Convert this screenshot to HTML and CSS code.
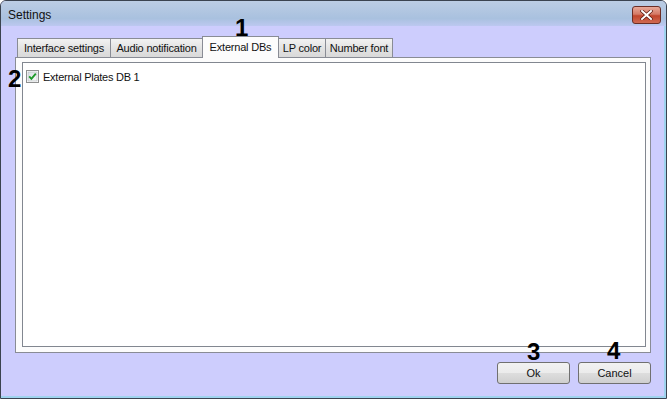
FILE: index.html
```html
<!DOCTYPE html>
<html lang="en">
<head>
  <meta charset="UTF-8">
  <title>Settings</title>
  <link rel="stylesheet" href="styles.css">
</head>
<body>
  <div class="window">
    <div class="titlebar">
      <span class="title">Settings</span>
      <div class="close">
        <svg width="13" height="10" viewBox="0 0 13 10">
          <path d="M2 1 L11 9 M11 1 L2 9" stroke="#5a1a10" stroke-width="3.4" stroke-linecap="square"/>
          <path d="M2 1 L11 9 M11 1 L2 9" stroke="#fff" stroke-width="2" stroke-linecap="square"/>
        </svg>
      </div>
    </div>

    <div class="client">
      <div class="tabs">
        <div class="tab w1">Interface settings</div>
        <div class="tab w2">Audio notification</div>
        <div class="tab active w3">External DBs</div>
        <div class="tab w4">LP color</div>
        <div class="tab w5">Number font</div>
      </div>

      <div class="panel">
        <div class="listbox">
          <label class="item">
            <svg class="check" width="13" height="13" viewBox="0 0 13 13">
              <defs>
                <linearGradient id="cb" x1="0" y1="0" x2="1" y2="1">
                  <stop offset="0" stop-color="#d8dde3"/>
                  <stop offset="1" stop-color="#fbfbfb"/>
                </linearGradient>
              </defs>
              <rect x="0.5" y="0.5" width="12" height="12" fill="#fff" stroke="#8e8f8f"/>
              <rect x="2" y="2" width="9" height="9" fill="url(#cb)" stroke="#b3b8bd" stroke-width="0.6"/>
              <path d="M3.2 6.4 L5.4 8.8 L9.8 3.6" fill="none" stroke="#1f9a2a" stroke-width="1.9"/>
            </svg>
            <span>External Plates DB 1</span>
          </label>
        </div>
      </div>

      <div class="footer">
        <button class="btn">Ok</button>
        <button class="btn">Cancel</button>
      </div>
    </div>

    <span class="mark m1">1</span>
    <span class="mark m2">2</span>
    <span class="mark m3">3</span>
    <span class="mark m4">4</span>
  </div>
</body>
</html>
```

FILE: styles.css
```css
body { margin: 0; font-family: "Liberation Sans", Arial, sans-serif; background: #fff; }
.window { position: relative; width: 667px; height: 399px; box-sizing: border-box; border: 1px solid #3b4350; border-radius: 6px 6px 0 0; background: #cdcdfd; box-shadow: inset -2px -2px 0 #9fd3ee; display: flex; flex-direction: column; overflow: hidden; }
.titlebar { height: 25px; display: flex; align-items: center; justify-content: space-between; padding: 0 5px 0 7px; background: linear-gradient(#bccde4, #a9c1df 70%, #bcc8f0); }
.title { font-size: 12px; color: #111; margin-top: 2px; }
.close { width: 27px; height: 16px; margin-top: 3px; border: 1px solid #6b2e26; border-radius: 3px; background: linear-gradient(#e8a898, #d47a66 45%, #c0452c 55%, #d06a52); display: flex; align-items: center; justify-content: center; }
.client { flex: 1; display: flex; flex-direction: column; padding: 10px 15px 0 14px; }
.tabs { display: flex; align-items: flex-end; height: 21px; padding-left: 2px; position: relative; z-index: 1; }
.tab { box-sizing: border-box; height: 19px; border: 1px solid #898c95; border-bottom: none; background: linear-gradient(#f2f2f2, #e3e3e3 50%, #d9d9d9); font-size: 11px; letter-spacing: -0.2px; color: #111; display: flex; align-items: center; justify-content: center; margin-right: -1px; }
.tab.active { height: 22px; margin-bottom: -1px; background: #fcfcfc; padding-bottom: 2px; }
.w1 { width: 94px; }
.w2 { width: 93px; }
.w3 { width: 77px; }
.w4 { width: 48px; }
.w5 { width: 68px; }
.panel { height: 296px; box-sizing: border-box; border: 1px solid #898c95; background: #fcfcfc; padding: 4px 4px 5px 6px; }
.listbox { height: 100%; box-sizing: border-box; border: 1px solid #828790; background: #fff; padding: 7px 3px; }
.item { display: flex; align-items: center; gap: 4px; font-size: 11px; letter-spacing: -0.25px; color: #111; }
.check { flex: none; }
.footer { display: flex; justify-content: flex-end; gap: 8px; margin-top: 9px; }
.btn { width: 73px; height: 22px; border: 1px solid #707070; border-radius: 3px; background: linear-gradient(#f2f2f2, #ebebeb 50%, #dddddd 51%, #cfcfcf); font-family: "Liberation Sans", Arial, sans-serif; font-size: 11px; font-weight: normal; color: #111; padding: 0; }
.mark { position: absolute; font-size: 24px; font-weight: bold; line-height: 1; color: #000; }
.m1 { left: 234px; top: 15px; }
.m2 { left: 7px; top: 66px; }
.m3 { left: 526px; top: 339px; }
.m4 { left: 606px; top: 338px; }
```
